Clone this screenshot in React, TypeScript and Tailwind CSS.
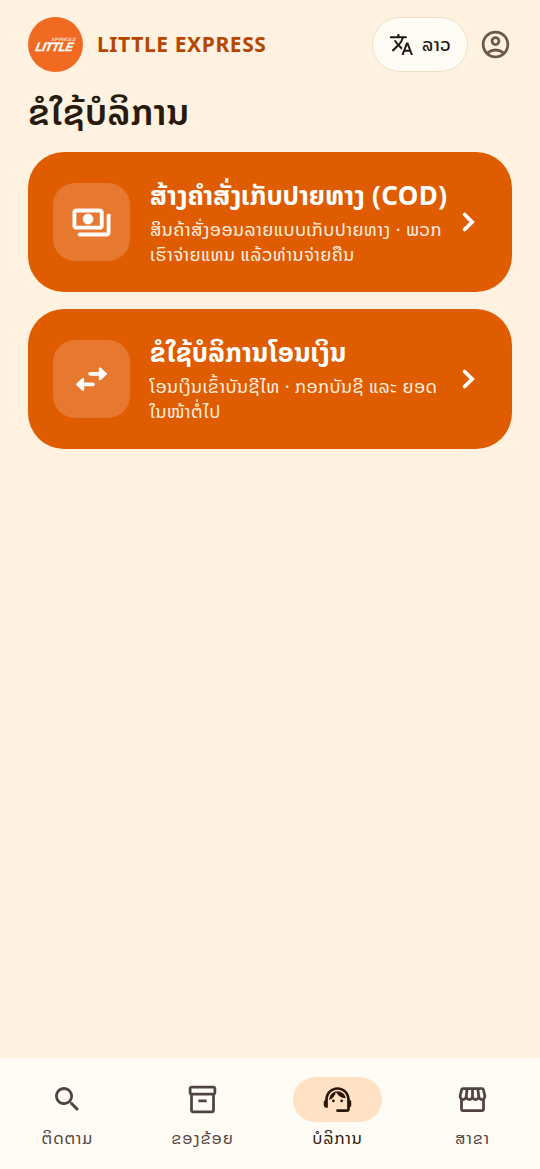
import type { ReactNode } from 'react';
import { MdTranslate, MdOutlineAccountCircle } from 'react-icons/md';

interface IconProps {
  size: number;
  children: ReactNode;
}

const Icon = ({ size, children }: IconProps) => (
  <svg width={size} height={size} viewBox="0 0 24 24" fill="currentColor" className="shrink-0">
    {children}
  </svg>
);

const PaymentsIcon = () => (
  <Icon size={41}>
    <path d="M19 14V6c0-1.100-.9-2-2-2H3c-1.100 0-2 .9-2 2v8c0 1.100.9 2 2 2h14c1.100 0 2-.9 2-2zm-2 0H3V6h14v8zm-7-7c-1.660 0-3 1.340-3 3s1.340 3 3 3 3-1.340 3-3-1.340-3-3-3zm13 0v11c0 1.100-.9 2-2 2H5c-.55 0-1-.45-1-1s.45-1 1-1h16V8c0-.55.45-1 1-1s1 .45 1 1z" stroke="currentColor" strokeWidth="0.25" />
  </Icon>
);

const SwapIcon = () => (
  <Icon size={41}>
    <g stroke="currentColor" strokeLinecap="round" strokeLinejoin="round">
      <path d="M11.200 8.700H18M12.800 14.900H6" fill="none" strokeWidth="2.200" />
      <path d="M17 5.600v6.200L20.300 8.700zM7 11.800v6.200L3.700 14.900z" strokeWidth="1.400" />
    </g>
  </Icon>
);

const ChevronIcon = () => (
  <Icon size={34}>
    <path d="M8.900 6.700l5.300 5.300-5.300 5.300" fill="none" stroke="currentColor" strokeWidth="2.700" strokeLinecap="round" />
  </Icon>
);

const SearchIcon = () => (
  <Icon size={33}>
    <path d="M15.500 14h-.79l-.28-.27c1.200-1.400 1.820-3.310 1.480-5.340-.47-2.780-2.790-5-5.590-5.340-4.230-.52-7.790 3.040-7.270 7.270.34 2.800 2.560 5.120 5.340 5.590 2.030.34 3.940-.28 5.340-1.480l.27.280v.79l4.250 4.250c.41.410 1.080.410 1.490 0 .41-.41.410-1.080 0-1.490L15.500 14zm-6 0C7.010 14 5 11.990 5 9.500S7.010 5 9.500 5 14 7.010 14 9.500 11.990 14 9.500 14z" />
  </Icon>
);

const BoxIcon = () => (
  <Icon size={33}>
    <path d="M20 2H4c-1 0-2 .9-2 2v3.010c0 .72.430 1.340 1 1.690V20c0 1.100 1.100 2 2 2h14c.9 0 2-.9 2-2V8.700c.57-.35 1-.97 1-1.690V4c0-1.100-1-2-2-2zm-1 18H5V9h14v11zm1-13H4V4h16v3zM9 12h6v2H9z" />
  </Icon>
);

const AgentIcon = () => (
  <Icon size={33}>
    <path d="M21 12.220C21 6.730 16.740 3 12 3c-4.690 0-9 3.650-9 9.280-.6.340-1 .98-1 1.720v2c0 1.100.9 2 2 2h1v-6.100c0-3.870 3.130-7 7-7s7 3.130 7 7V19h-7c-.55 0-1 .45-1 1s.45 1 1 1h7c1.100 0 2-.9 2-2v-1.220c.59-.31 1-.92 1-1.640v-2.300c0-.7-.41-1.310-1-1.620z" />
    <circle cx="9" cy="13" r="1" />
    <circle cx="15" cy="13" r="1" />
    <path d="M18 11.030C17.520 8.180 15.040 6 12.050 6c-3.030 0-6.290 2.510-6.030 6.450 2.470-1.010 4.330-3.210 4.860-5.890 1.310 2.630 4 4.440 7.120 4.470z" />
  </Icon>
);

const StoreIcon = () => (
  <Icon size={33}>
    <path d="M21.900 8.890l-1.050-4.370c-.22-.9-1-1.520-1.910-1.520H5.050c-.9 0-1.690.630-1.900 1.520L2.100 8.890c-.24 1.020-.02 2.060.620 2.880.08.110.190.190.280.290V19c0 1.100.9 2 2 2h14c1.100 0 2-.9 2-2v-6.940c.09-.09.200-.18.280-.28.640-.82.870-1.870.620-2.890zm-2.990-3.900l1.050 4.370c.1.420.010.840-.25 1.170-.14.180-.44.470-.94.470-.61 0-1.140-.49-1.210-1.140L16.980 5l1.930-.01zM13 5h1.960l.54 4.520c.05.390-.07.780-.33 1.070-.22.260-.54.410-.95.410-.67 0-1.220-.59-1.220-1.310V5zM8.490 9.520L9.040 5H11v4.690c0 .72-.55 1.310-1.290 1.310-.34 0-.65-.15-.89-.41-.25-.29-.37-.68-.33-1.070zm-4.450-.16L5.050 5h1.970l-.58 4.860c-.08.650-.6 1.140-1.210 1.140-.49 0-.8-.29-.93-.47-.27-.32-.36-.75-.26-1.170zM5 19v-6.030c.08.010.15.030.23.030.87 0 1.660-.36 2.240-.95.600.6 1.400.95 2.310.95.870 0 1.650-.36 2.230-.93.590.57 1.390.93 2.290.93.840 0 1.640-.35 2.240-.95.580.59 1.370.95 2.240.95.080 0 .15-.02.230-.03V19H5z" />
  </Icon>
);

const Logo = () => (
  <div className="flex h-[55px] w-[55px] items-center justify-center rounded-full bg-[#f06b21]">
    <svg width="55" height="55" viewBox="0 0 55 55" fill="white" fontFamily="Liberation Sans, sans-serif" fontStyle="italic">
      <text transform="translate(22.500 24.300) skewX(-14)" fontSize="4.800" fontWeight="700" textLength="25" lengthAdjust="spacingAndGlyphs" opacity="0.75">XPRESS</text>
      <text transform="translate(7 33.800) skewX(-12)" fontSize="12" fontWeight="700" stroke="white" strokeWidth="0.4" textLength="37.500" lengthAdjust="spacingAndGlyphs">LITTLE</text>
    </svg>
  </div>
);

interface ServiceCardProps {
  icon: ReactNode;
  title: string;
  lines: string[];
}

const ServiceCard = ({ icon, title, lines }: ServiceCardProps) => (
  <button className="flex h-[140px] w-full items-center rounded-[36px] bg-[#e05c00] pl-[25px] text-left text-white">
    <div className="flex h-[78px] w-[77px] shrink-0 items-center justify-center rounded-[22px] bg-[#e6782f]">
      {icon}
    </div>
    <div className="ml-5 w-[299px] shrink-0 whitespace-nowrap">
      <h2 className="text-[26px] leading-[34px] font-bold tracking-[0.4px]">{title}</h2>
      <div className="mt-[5px] text-[18px] leading-[25px] tracking-[0.4px] text-[#fff0e0]">
        {lines.map(line => <p key={line}>{line}</p>)}
      </div>
    </div>
    <div className="ml-[3px]">
      <ChevronIcon />
    </div>
  </button>
);

const services = [
  {
    icon: <PaymentsIcon />,
    title: 'ສ້າງຄຳສັ່ງເກັບປາຍທາງ (COD)',
    lines: ['ສິນຄ້າສັ່ງອອນລາຍແບບເກັບປາຍທາງ · ພວກ', 'ເຮົາຈ່າຍແທນ ແລ້ວທ່ານຈ່າຍຄືນ'],
  },
  {
    icon: <SwapIcon />,
    title: 'ຂໍໃຊ້ບໍລິການໂອນເງິນ',
    lines: ['ໂອນເງິນເຂົ້າບັນຊີໄທ · ກອກບັນຊີ ແລະ ຍອດ', 'ໃນໜ້າຕໍ່ໄປ'],
  },
];

const tabs = [
  { label: 'ຕິດຕາມ', icon: <SearchIcon /> },
  { label: 'ຂອງຂ້ອຍ', icon: <BoxIcon /> },
  { label: 'ບໍລິການ', icon: <AgentIcon />, active: true },
  { label: 'ສາຂາ', icon: <StoreIcon /> },
];

export default function App() {
  return (
    <div className="flex h-[1169px] w-[540px] flex-col overflow-hidden bg-[#fff2e0] font-['Noto_Sans','Noto_Sans_Lao',sans-serif]">
      <header className="mt-[17px] flex h-[55px] shrink-0 items-center pl-7">
        <Logo />
        <span className="ml-3.5 w-[275px] text-[21px] font-bold tracking-[0.6px] text-[#b34700]">LITTLE EXPRESS</span>
        <button className="flex h-[55px] w-[96px] items-center rounded-full border border-[#f0dec0] bg-[#fffcf5] pl-4 text-[#21160e]">
          <MdTranslate size={25} />
          <span className="ml-2 text-[18px] font-medium tracking-[0.5px]">ລາວ</span>
        </button>
        <MdOutlineAccountCircle size={33} className="ml-[11px] text-[#6d5948]" />
      </header>

      <main className="flex-1 px-7">
        <h1 className="mt-[17px] h-[63px] text-[36px] leading-[46px] font-semibold tracking-[0.45px] whitespace-nowrap text-[#281a0c]">ຂໍໃຊ້ບໍລິການ</h1>
        <div className="flex flex-col gap-[17px]">
          {services.map(service => <ServiceCard key={service.title} {...service} />)}
        </div>
      </main>

      <nav className="grid h-[111px] shrink-0 grid-cols-4 bg-[#fffcf5] pt-[19px]">
        {tabs.map(tab => (
          <div key={tab.label} className={tab.active ? 'flex flex-col items-center text-[#2b1708]' : 'flex flex-col items-center text-[#51433f]'}>
            <div className={tab.active ? 'flex h-[45px] w-[89px] items-center justify-center rounded-full bg-[#ffe1c3]' : 'flex h-[45px] w-[89px] items-center justify-center'}>
              {tab.icon}
            </div>
            <span className="mt-1 text-[16.500px] leading-6 tracking-[0.9px]">{tab.label}</span>
          </div>
        ))}
      </nav>
    </div>
  );
}
